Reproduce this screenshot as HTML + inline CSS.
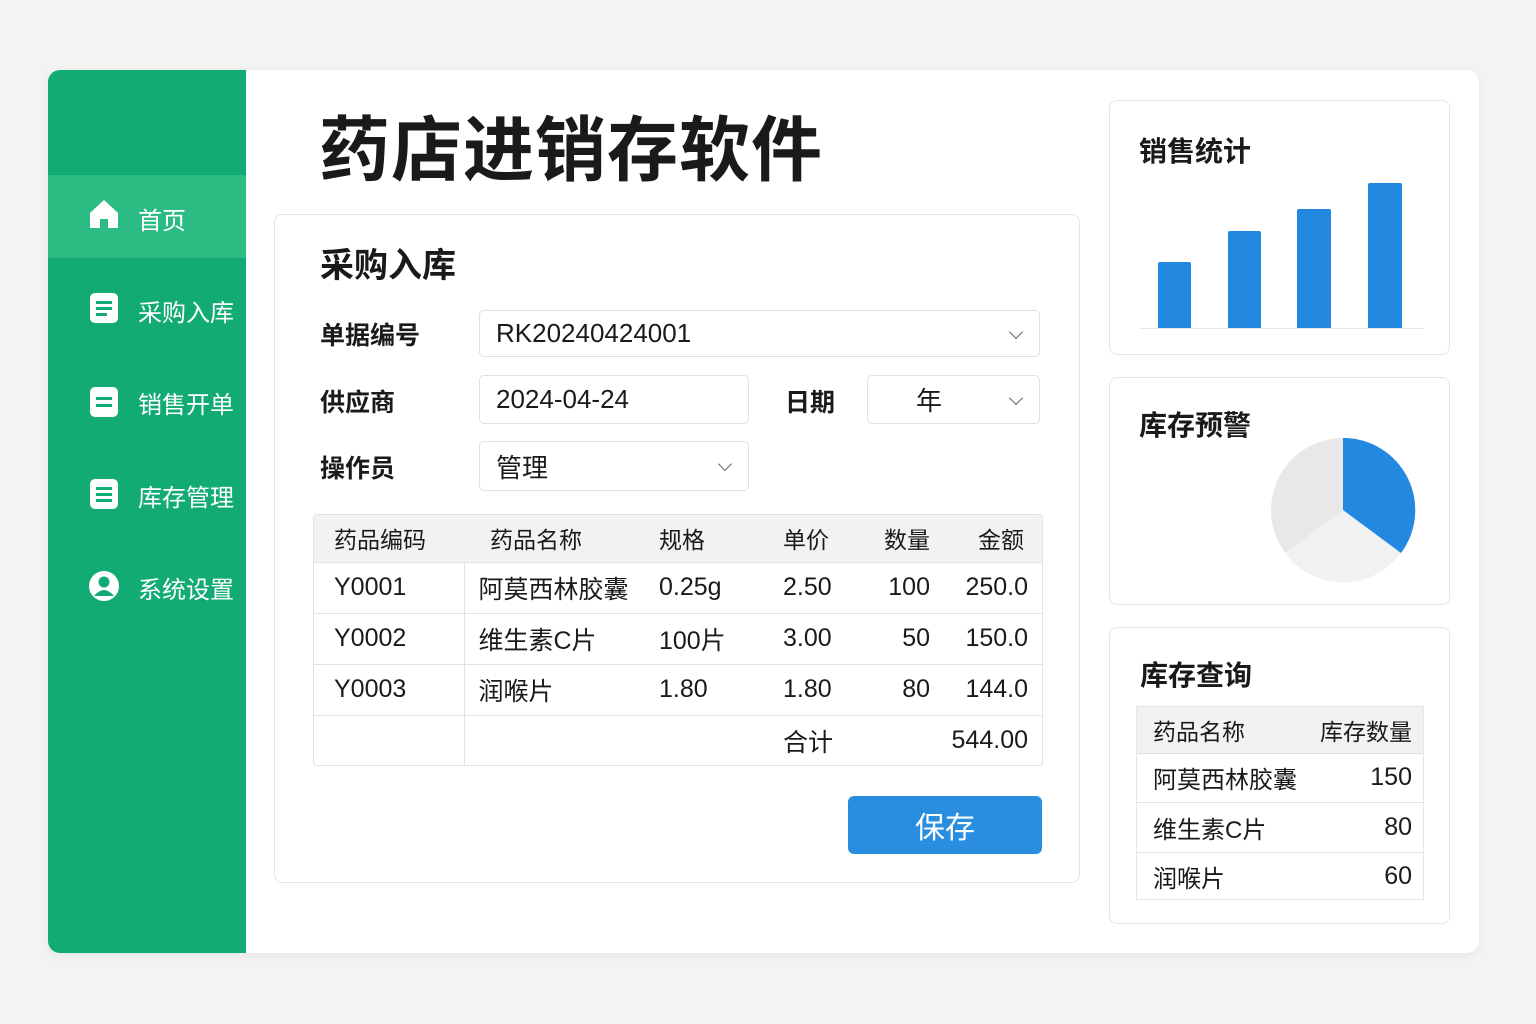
<!DOCTYPE html>
<html><head><meta charset="utf-8">
<style>
*{margin:0;padding:0;box-sizing:border-box}
body{width:1536px;height:1024px;background:#f3f3f1;font-family:"Liberation Sans","Noto Sans CJK SC",sans-serif;color:#1a1a1a;position:relative;overflow:hidden}
.abs{position:absolute}
.card{left:48px;top:70px;width:1431px;height:883px;background:#fff;border-radius:12px;overflow:hidden;box-shadow:0 2px 10px rgba(0,0,0,.06)}
.side{left:0;top:0;width:198px;height:883px;background:#12ab74}
.act{left:0;top:105px;width:198px;height:83px;background:#2dbb84}
.nav{color:#fff;font-size:24px;left:90px}
.ico{left:40px;width:32px;height:32px}
.panel{background:#fff;border:1px solid #e6e6e6;border-radius:8px}
.lbl{font-size:25px;font-weight:bold}
.inp{border:1px solid #e0e0e0;border-radius:5px;background:#fff;font-size:26px;padding-left:16px;display:flex;align-items:center}
.chev{position:absolute;right:18px;top:50%;width:10px;height:10px;border-right:1.5px solid #666;border-bottom:1.5px solid #666;transform:translateY(-70%) rotate(45deg)}
table{border-collapse:collapse;table-layout:fixed}
.t td{font-size:25px;border-top:1px solid #e2e2e2;white-space:nowrap}
.c3{padding-left:14px}.c4{padding-left:13px}.c5{text-align:right;padding-right:10px}.c6{text-align:right;padding-right:14px}
</style></head><body>
<div class="abs card">
 <div class="abs side"></div>
 <div class="abs act"></div>
 <svg class="abs ico" style="top:128px" viewBox="0 0 32 32"><path d="M2 15 L16 2 L30 15 L30 30 L20 30 L20 21 L12 21 L12 30 L2 30 Z" fill="#fff"/></svg>
 <div class="abs nav" style="top:131px">首页</div>
 <svg class="abs ico" style="top:222px" viewBox="0 0 32 32"><rect x="2" y="1" width="28" height="30" rx="5" fill="#fff"/><rect x="8" y="9" width="16" height="3" fill="#12ab74"/><rect x="8" y="15" width="16" height="3" fill="#12ab74"/><rect x="8" y="21" width="11" height="3" fill="#12ab74"/></svg>
 <div class="abs nav" style="top:223px">采购入库</div>
 <svg class="abs ico" style="top:316px" viewBox="0 0 32 32"><rect x="2" y="1" width="28" height="30" rx="5" fill="#fff"/><rect x="8" y="11" width="16" height="3" fill="#12ab74"/><rect x="8" y="18" width="16" height="3" fill="#12ab74"/></svg>
 <div class="abs nav" style="top:315px">销售开单</div>
 <svg class="abs ico" style="top:408px" viewBox="0 0 32 32"><rect x="2" y="1" width="28" height="30" rx="5" fill="#fff"/><rect x="8" y="9" width="16" height="3" fill="#12ab74"/><rect x="8" y="15" width="16" height="3" fill="#12ab74"/><rect x="8" y="21" width="16" height="3" fill="#12ab74"/></svg>
 <div class="abs nav" style="top:408px">库存管理</div>
 <svg class="abs ico" style="top:500px" viewBox="0 0 32 32"><circle cx="16" cy="16" r="15" fill="#fff"/><circle cx="16" cy="12" r="5.5" fill="#12ab74"/><path d="M6 26 Q16 14 26 26" fill="#12ab74"/></svg>
 <div class="abs nav" style="top:500px">系统设置</div>

 <div class="abs" style="left:271px;top:24px;font-size:71px;font-weight:bold;letter-spacing:1px">药店进销存软件</div>

 <div class="abs panel" style="left:226px;top:144px;width:806px;height:669px"></div>
 <div class="abs" style="left:272px;top:168px;font-size:34px;font-weight:bold">采购入库</div>
 <div class="abs lbl" style="left:272px;top:246px">单据编号</div>
 <div class="abs inp" style="left:431px;top:240px;width:561px;height:47px">RK20240424001<span class="chev"></span></div>
 <div class="abs lbl" style="left:272px;top:313px">供应商</div>
 <div class="abs inp" style="left:431px;top:305px;width:270px;height:49px">2024-04-24</div>
 <div class="abs lbl" style="left:737px;top:313px">日期</div>
 <div class="abs inp" style="left:819px;top:305px;width:173px;height:49px;padding-left:48px">年<span class="chev"></span></div>
 <div class="abs lbl" style="left:272px;top:379px">操作员</div>
 <div class="abs inp" style="left:431px;top:371px;width:270px;height:50px">管理<span class="chev"></span></div>

 <div class="abs" style="left:265px;top:444px;width:730px;height:252px;border:1px solid #e2e2e2;border-radius:4px;overflow:hidden">
 <table class="t" style="width:728px">
  <colgroup><col style="width:150px"><col style="width:181px"><col style="width:125px"><col style="width:80px"><col style="width:90px"><col style="width:102px"></colgroup>
  <tr style="height:47px;background:#f2f2f2"><td style="border:0;padding-left:20px;font-size:23px">药品编码</td><td style="border:0;padding-left:26px;font-size:23px">药品名称</td><td class="c3" style="border:0;font-size:23px">规格</td><td class="c4" style="border:0;font-size:23px">单价</td><td class="c5" style="border:0;font-size:23px">数量</td><td class="c6" style="border:0;font-size:23px;padding-right:18px">金额</td></tr>
  <tr style="height:51px"><td style="padding-left:20px;border-right:1px solid #e2e2e2">Y0001</td><td style="padding-left:14px">阿莫西林胶囊</td><td class="c3">0.25g</td><td class="c4">2.50</td><td class="c5">100</td><td class="c6">250.0</td></tr>
  <tr style="height:51px"><td style="padding-left:20px;border-right:1px solid #e2e2e2">Y0002</td><td style="padding-left:14px">维生素C片</td><td class="c3">100片</td><td class="c4">3.00</td><td class="c5">50</td><td class="c6">150.0</td></tr>
  <tr style="height:51px"><td style="padding-left:20px;border-right:1px solid #e2e2e2">Y0003</td><td style="padding-left:14px">润喉片</td><td class="c3">1.80</td><td class="c4">1.80</td><td class="c5">80</td><td class="c6">144.0</td></tr>
  <tr style="height:51px"><td style="border-right:1px solid #e2e2e2"></td><td></td><td></td><td class="c4">合计</td><td></td><td class="c6">544.00</td></tr>
 </table></div>
 <div class="abs" style="left:800px;top:726px;width:194px;height:58px;background:#2a8ee0;border-radius:6px;color:#fff;font-size:30px;display:flex;align-items:center;justify-content:center">保存</div>

 <div class="abs panel" style="left:1061px;top:30px;width:341px;height:255px"></div>
 <div class="abs" style="left:1091px;top:60px;font-size:28px;font-weight:bold">销售统计</div>
 <div class="abs" style="left:1092px;top:258px;width:284px;height:1px;background:#e6e6e6"></div>
 <div class="abs" style="left:1110px;top:192px;width:33px;height:66px;background:#2389e0;border-radius:2px 2px 0 0"></div>
 <div class="abs" style="left:1180px;top:161px;width:33px;height:97px;background:#2389e0;border-radius:2px 2px 0 0"></div>
 <div class="abs" style="left:1249px;top:139px;width:34px;height:119px;background:#2389e0;border-radius:2px 2px 0 0"></div>
 <div class="abs" style="left:1320px;top:113px;width:34px;height:145px;background:#2389e0;border-radius:2px 2px 0 0"></div>

 <div class="abs panel" style="left:1061px;top:307px;width:341px;height:228px"></div>
 <div class="abs" style="left:1091px;top:334px;font-size:28px;font-weight:bold">库存预警</div>
 <svg class="abs" style="left:1222px;top:365px" width="146" height="150" viewBox="0 0 146 150">
  <circle cx="73" cy="75" r="72" fill="#e8e8e8"/>
  <path d="M73 75 L131 118 A72 72 0 0 1 15 118 Z" fill="#f1f1f1"/>
  <path d="M73 75 L73 3 A72 72 0 0 1 131 118 Z" fill="#2389e0"/>
 </svg>

 <div class="abs panel" style="left:1061px;top:557px;width:341px;height:297px"></div>
 <div class="abs" style="left:1092px;top:584px;font-size:28px;font-weight:bold">库存查询</div>
 <div class="abs" style="left:1088px;top:636px;width:288px;height:194px;border:1px solid #e6e6e6;overflow:hidden">
 <table class="t" style="width:287px">
  <tr style="height:46px;background:#f2f2f2"><td style="border:0;padding-left:16px;font-size:23px">药品名称</td><td style="border:0;text-align:right;padding-right:12px;font-size:23px">库存数量</td></tr>
  <tr style="height:49px"><td style="padding-left:16px;font-size:24px">阿莫西林胶囊</td><td style="text-align:right;padding-right:12px">150</td></tr>
  <tr style="height:50px"><td style="padding-left:16px;font-size:24px">维生素C片</td><td style="text-align:right;padding-right:12px">80</td></tr>
  <tr style="height:49px"><td style="padding-left:16px;font-size:24px">润喉片</td><td style="text-align:right;padding-right:12px">60</td></tr>
 </table></div>
</div>
</body></html>
